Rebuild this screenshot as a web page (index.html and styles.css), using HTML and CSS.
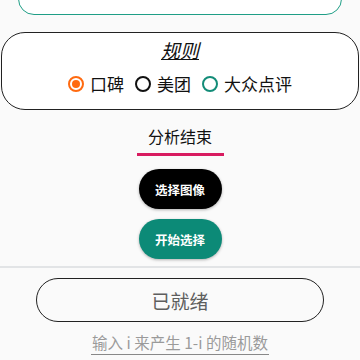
FILE: index.html
```html
<!DOCTYPE html>
<html lang="zh">
<head>
  <meta charset="utf-8">
  <title>规则</title>
  <link rel="stylesheet" href="styles.css">
</head>
<body>
  <div class="top-box"></div>

  <div class="rule-box">
    <div class="rule-title">规则</div>
    <div class="radio-row">
      <label class="radio"><span class="dot orange checked"></span>口碑</label>
      <label class="radio"><span class="dot black"></span>美团</label>
      <label class="radio"><span class="dot teal"></span>大众点评</label>
    </div>
  </div>

  <div class="tab">
    <div class="tab-label">分析结束</div>
    <div class="tab-line"></div>
  </div>

  <div class="buttons">
    <button type="button" class="btn btn-black">选择图像</button>
    <button type="button" class="btn btn-teal">开始选择</button>
  </div>

  <div class="divider"></div>

  <div class="status">已就绪</div>

  <div class="hint">输入 i 来产生 1-i 的随机数</div>
</body>
</html>
```

FILE: styles.css
```css
html, body
{
  margin: 0;
  padding: 0;
  background: #fafafa;
  font-family: "Noto Sans CJK SC", "Noto Sans", sans-serif;
  color: #111;
  overflow: hidden;
}
body
{
  display: flex;
  flex-direction: column;
  width: 360px;
  height: 360px;
}
.top-box
{
  margin: -46px 18px 0 18px;
  height: 59px;
  border: 1.5px solid #1f9e86;
  border-radius: 16px;
  background: #fff;
}
.rule-box
{
  margin: 17px 1px 0 1px;
  height: 76px;
  border: 1px solid #222;
  border-radius: 24px;
  background: #fff;
  display: flex;
  flex-direction: column;
  align-items: center;
}
.rule-title
{
  margin-top: 4px;
  font-size: 19px;
  line-height: 26px;
  font-style: italic;
  text-decoration: underline;
}
.radio-row
{
  display: flex;
  align-items: center;
  gap: 11px;
  margin-top: 9px;
}
.radio
{
  display: flex;
  align-items: center;
  gap: 6px;
  font-size: 17px;
  line-height: 24px;
}
.dot
{
  width: 12px;
  height: 12px;
  border: 2px solid #111;
  border-radius: 50%;
  position: relative;
}
.dot.orange { border-color: #ff6a10; }
.dot.teal { border-color: #138c78; }
.dot.checked::after
{
  content: "";
  position: absolute;
  left: 2px;
  top: 2px;
  width: 8px;
  height: 8px;
  border-radius: 50%;
  background: #ff6a10;
}
.tab
{
  display: flex;
  flex-direction: column;
  align-items: center;
  margin-top: 14px;
}
.tab-label
{
  font-size: 16px;
  line-height: 24px;
}
.tab-line
{
  width: 87px;
  height: 3px;
  margin-top: 5px;
  background: #d81b60;
}
.buttons
{
  display: flex;
  flex-direction: column;
  align-items: center;
  gap: 10px;
  margin-top: 13px;
}
.btn
{
  width: 83px;
  height: 40px;
  border: none;
  border-radius: 20px;
  color: #fff;
  font-family: "Noto Sans CJK SC", sans-serif;
  font-size: 12.5px;
  font-weight: bold;
  box-shadow: 0 1px 3px rgba(0, 0, 0, 0.3);
  padding: 0;
}
.btn-black { background: #000; }
.btn-teal { background: #0c8a77; }
.divider
{
  margin-top: 7px;
  height: 2px;
  background: #e2e4e6;
}
.status
{
  margin: 10px 36px 0 36px;
  height: 42px;
  border: 1px solid #222;
  border-radius: 22px;
  display: flex;
  align-items: center;
  justify-content: center;
  font-size: 19px;
  color: #5e5e5e;
}
.hint
{
  align-self: center;
  margin-top: 9px;
  font-size: 15.5px;
  line-height: 22px;
  color: #9a9a9a;
  border-bottom: 1px solid #888;
  padding: 0 1px 1px 1px;
}
```
